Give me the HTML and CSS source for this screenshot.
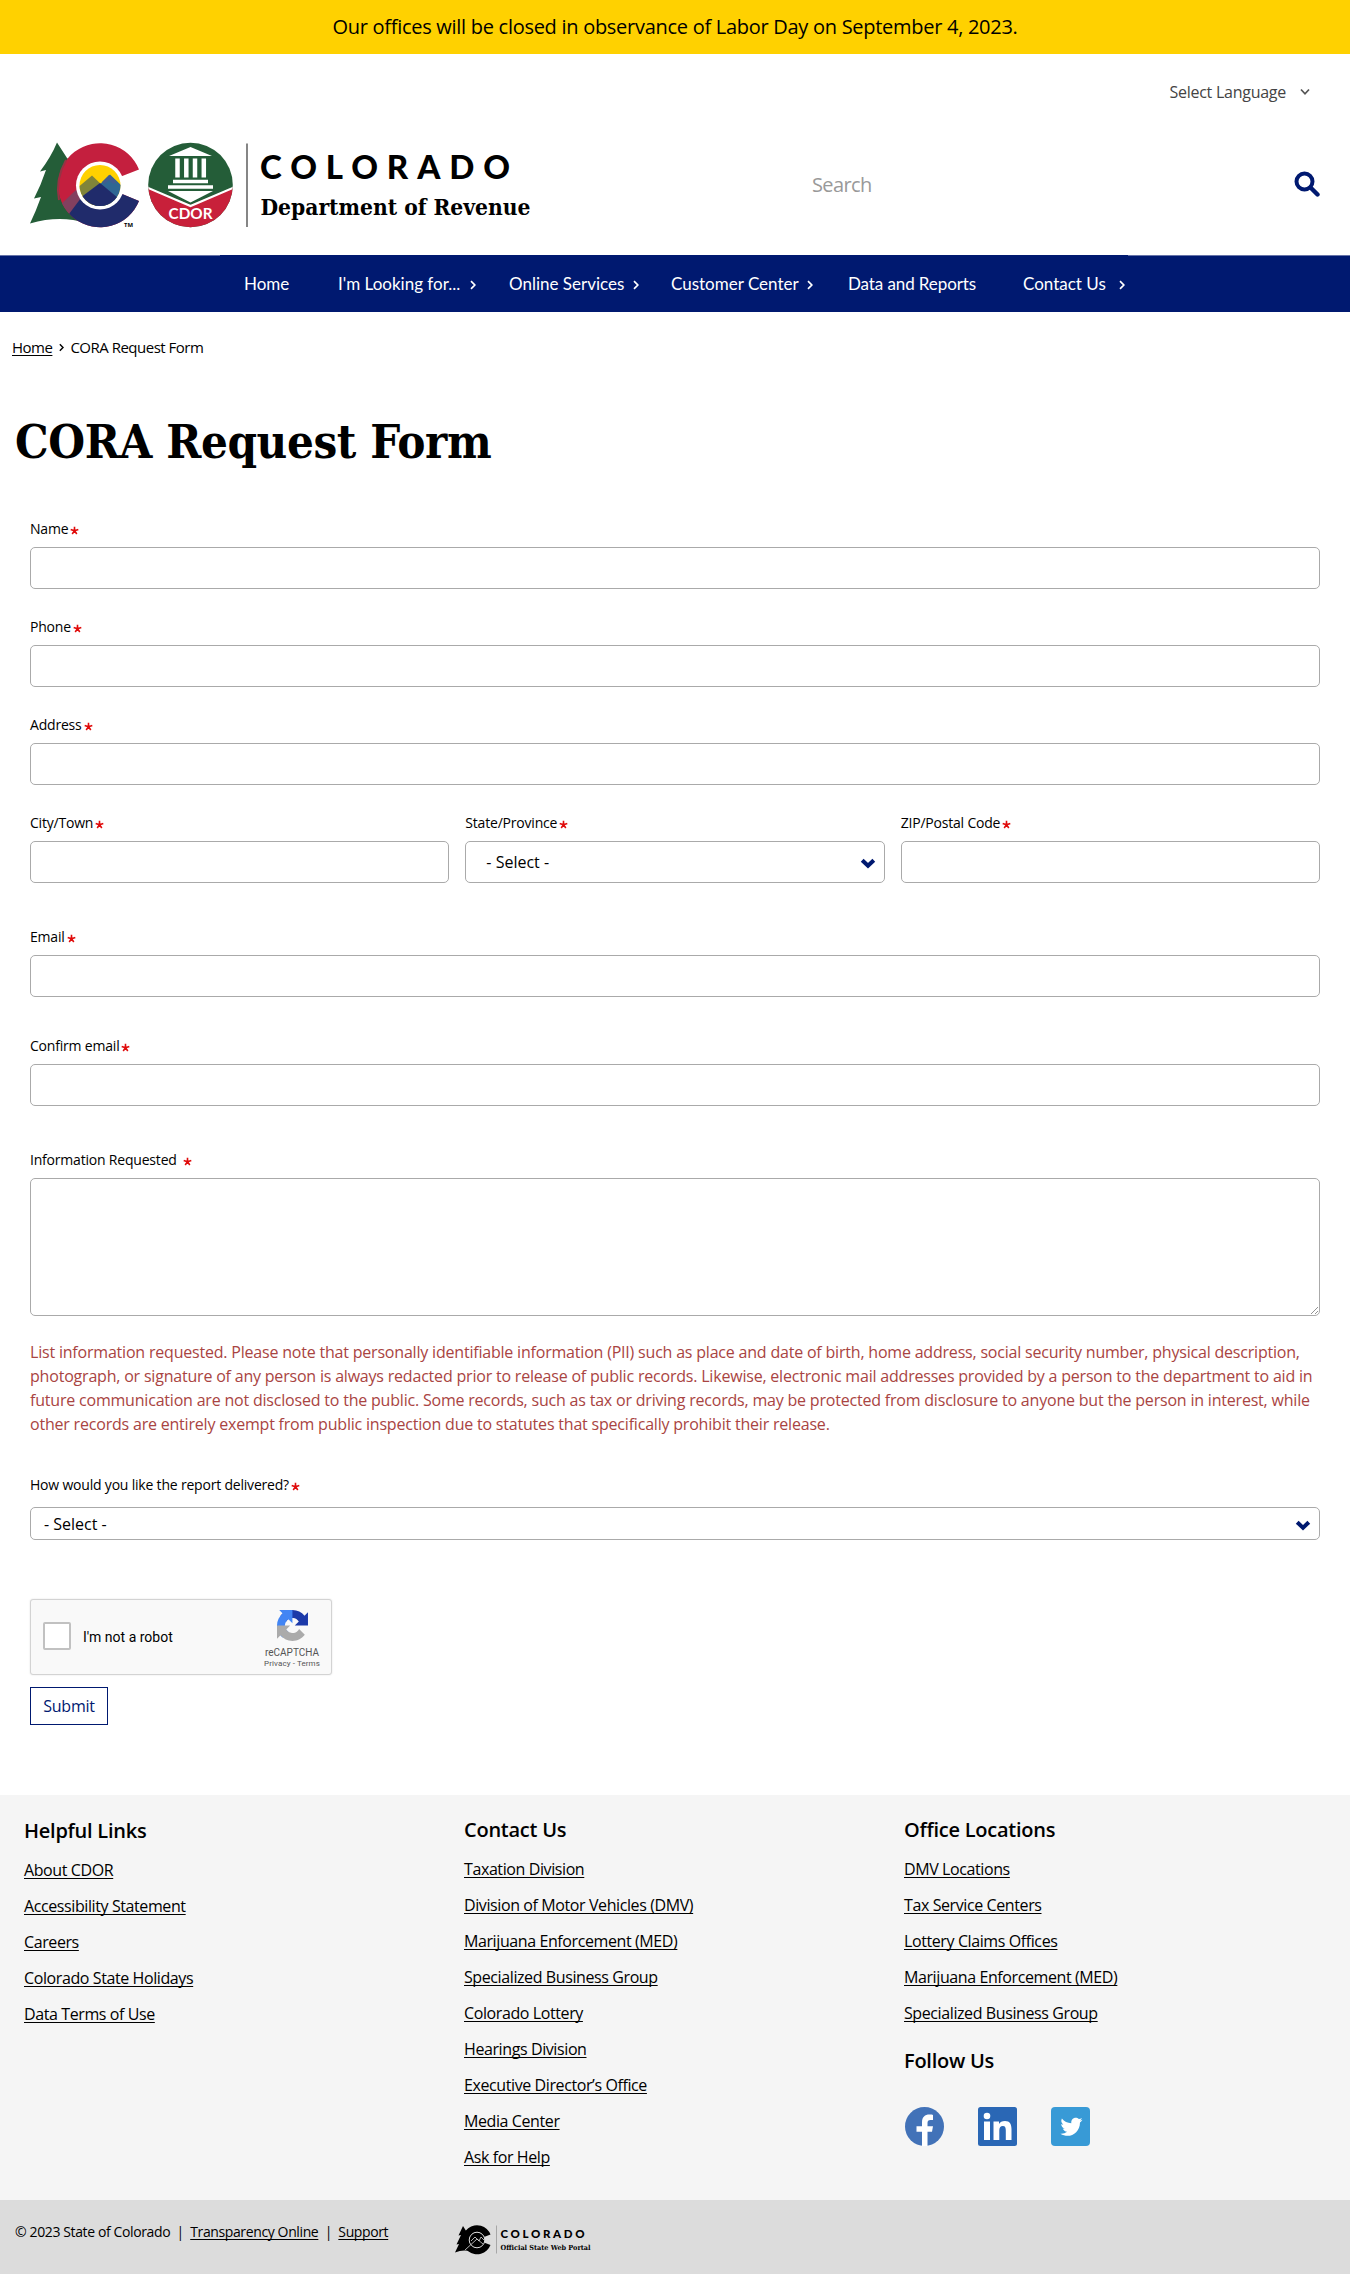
FILE: index.html
```html
<!DOCTYPE html>
<html lang="en">
<head>
<meta charset="utf-8">
<title>CORA Request Form | Department of Revenue</title>
<link rel="stylesheet" href="styles.css">
</head>
<body>
<svg class="defs" width="0" height="0" aria-hidden="true">
  <symbol id="star" viewBox="0 0 9 9"><path d="M4.5 4.8V.8M4.5 4.8L.7 3.5M4.5 4.8L8.3 3.5M4.5 4.8L2.2 8M4.5 4.8L6.8 8" fill="none" stroke="#e00b0b" stroke-width="1.6"/></symbol>
  <symbol id="caret" viewBox="0 0 16 12"><path d="M2.2 3.2L8 8.8L13.8 3.2" fill="none" stroke="#001970" stroke-width="4"/></symbol>
  <symbol id="angle" viewBox="0 0 6 10"><path d="M1 1.2L4.8 5L1 8.8" fill="none" stroke="currentColor" stroke-width="1.7"/></symbol>
</svg>

<div class="alert">Our offices will be closed in observance of Labor Day on September 4, 2023.</div>

<header class="header">
  <div class="language"><span>Select Language</span>
    <svg width="10" height="8" viewBox="0 0 10 8"><path d="M1 1.5L5 5.8L9 1.5" fill="none" stroke="#555" stroke-width="1.7"/></svg>
  </div>
  <div class="masthead">
    <svg class="logo" width="540" height="92" viewBox="30 140 540 92" role="img" aria-label="Colorado Department of Revenue">
      <clipPath id="disc"><circle cx="190.5" cy="185" r="42.3"/></clipPath>
      <clipPath id="sun"><circle cx="100" cy="185.5" r="20.5"/></clipPath>
      <clipPath id="cshape"><path d="M139 169.5A42 42 0 1 0 139 201L121 193.5A22 22 0 1 1 121 176.5Z"/></clipPath>
      <path d="M57 142.500L67 158L100 185L86 223Q60 215 30 223.500Q36 211 41 197L34 198.500Q41 185 46 170L40 171.500Q51 157 57 142.500Z" fill="#245d38"/>
      <g clip-path="url(#cshape)">
        <rect x="56" y="140" width="90" height="92" fill="#c41f3e"/>
        <path d="M57 208L76 190L84 198L69 216Z" fill="#83405f"/>
        <path d="M66 218L84 194L121 186L150 198V232H60Z" fill="#202b6b"/>
      </g>
      <path d="M59 200Q55 180 66 160" fill="none" stroke="#963344" stroke-width="2"/>
      <circle cx="100" cy="185.500" r="24" fill="#fff"/>
      <g clip-path="url(#sun)">
        <rect x="78" y="163" width="44" height="45" fill="#ffd100"/>
        <path d="M76 189L92 175.500L105 188L96 208H76Z" fill="#80843a"/>
        <path d="M95 189L110 174.500L124 188V208H95Z" fill="#2f6793"/>
        <path d="M102 182L109 175L117 182L113 184L109 180L105 184Z" fill="#405d91"/>
        <path d="M76 201L100 183L124 203V210H76Z" fill="#202b6b"/>
      </g>
      <text x="124" y="227" class="tm" textLength="9" lengthAdjust="spacingAndGlyphs">TM</text>
      <g clip-path="url(#disc)">
        <rect x="148" y="142" width="86" height="86" fill="#245d38"/>
        <path d="M147 187L190.500 205L234 187V230H147Z" fill="#c8203a"/>
        <path d="M147 187.500L190.500 206L234 187.500" fill="none" stroke="#fff" stroke-width="2.200"/>
        <path d="M190.500 147L212 156H169ZM168 191H213L190.500 202.500ZM173 179.800H208V183.200H173ZM168 185.300H213V188.800H168Z" fill="#fff"/>
        <path d="M177.500 158.500V177.500M186.300 158.500V177.500M195 158.500V177.500M203.800 158.500V177.500" stroke="#fff" stroke-width="4.500"/>
        <text x="168.500" y="218.800" class="cdor" textLength="44" lengthAdjust="spacingAndGlyphs">CDOR</text>
      </g>
      <path d="M247 143.500V227" stroke="#222" stroke-width="1.100"/>
      <text x="260" y="178.500" class="brand" textLength="250">COLORADO</text>
      <text x="260.500" y="214.500" class="dept" textLength="270" lengthAdjust="spacingAndGlyphs">Department of Revenue</text>
    </svg>
    <div class="search"><span>Search</span>
      <svg width="26" height="26" viewBox="0 0 26 26"><circle cx="10.500" cy="10.500" r="8" fill="none" stroke="#001970" stroke-width="4"/><path d="M16.500 16.500L23.500 23.500" stroke="#001970" stroke-width="4.400" stroke-linecap="round"/></svg>
    </div>
  </div>
</header>

<nav class="nav">
  <ul>
    <li class="n1">Home</li>
    <li class="n2"><span>I'm Looking for...</span><svg><use href="#angle"/></svg></li>
    <li class="n3"><span>Online Services</span><svg><use href="#angle"/></svg></li>
    <li class="n4"><span>Customer Center</span><svg><use href="#angle"/></svg></li>
    <li class="n5">Data and Reports</li>
    <li class="n6"><span>Contact Us</span><svg><use href="#angle"/></svg></li>
  </ul>
</nav>

<main>
  <div class="crumbs"><a>Home</a><svg><use href="#angle"/></svg><span>CORA Request Form</span></div>
  <h1>CORA Request Form</h1>
  <form class="form">
    <div class="field"><label>Name<svg class="star"><use href="#star"/></svg></label><div class="box"></div></div>
    <div class="field"><label>Phone<svg class="star"><use href="#star"/></svg></label><div class="box"></div></div>
    <div class="field"><label>Address<svg class="star"><use href="#star"/></svg></label><div class="box"></div></div>
    <div class="row">
      <div class="field"><label>City/Town<svg class="star"><use href="#star"/></svg></label><div class="box"></div></div>
      <div class="field"><label>State/Province<svg class="star"><use href="#star"/></svg></label><div class="box select"><span>- Select -</span><svg class="caret"><use href="#caret"/></svg></div></div>
      <div class="field"><label>ZIP/Postal Code<svg class="star"><use href="#star"/></svg></label><div class="box"></div></div>
    </div>
    <div class="field wide-gap"><label>Email<svg class="star"><use href="#star"/></svg></label><div class="box"></div></div>
    <div class="field confirm"><label>Confirm email<svg class="star"><use href="#star"/></svg></label><div class="box"></div></div>
    <div class="field wide-gap"><label class="info">Information Requested<svg class="star"><use href="#star"/></svg></label>
      <div class="box area"><svg width="9" height="9" viewBox="0 0 9 9"><path d="M1 8L8 1M5 8L8 5" stroke="#777" stroke-width=".8"/></svg></div></div>
    <p class="help">List information requested. Please note that personally identifiable information (PII) such as place and date of birth, home address, social security number, physical description,<br>photograph, or signature of any person is always redacted prior to release of public records. Likewise, electronic mail addresses provided by a person to the department to aid in<br>future communication are not disclosed to the public. Some records, such as tax or driving records, may be protected from disclosure to anyone but the person in interest, while<br>other records are entirely exempt from public inspection due to statutes that specifically prohibit their release.</p>
    <div class="field delivery"><label>How would you like the report delivered?<svg class="star"><use href="#star"/></svg></label><div class="box select slim"><span>- Select -</span><svg class="caret"><use href="#caret"/></svg></div></div>
    <div class="captcha">
      <div class="check"></div><span class="robot">I'm not a robot</span>
      <div class="rc">
        <svg width="31" height="31" viewBox="0 0 64 64">
          <path fill="#1c3aa9" d="M64 31.955l-.033-1.370V4.687l-7.160 7.160C50.948 4.674 42.033.093 32.050.093c-10.400 0-19.622 4.960-25.458 12.640l11.736 11.860a15.550 15.550 0 0 1 4.754-5.334c2.050-1.600 4.952-2.906 8.968-2.906.485 0 .86.057 1.135.163 4.976.393 9.288 3.140 11.828 7.124l-8.307 8.307L64 31.953"/>
          <path fill="#4285f4" d="M31.862.094l-1.370.033H4.594l7.160 7.160C4.580 13.147 0 22.060 0 32.046c0 10.400 4.960 19.622 12.640 25.458L24.500 45.768a15.550 15.550 0 0 1-5.334-4.754c-1.600-2.050-2.906-4.952-2.906-8.968 0-.485.057-.86.163-1.135.393-4.976 3.140-9.288 7.124-11.828l8.307 8.307L31.860.095"/>
          <path fill="#ababab" d="M.001 32.045l.033 1.370v25.898l7.160-7.160c5.860 7.173 14.774 11.754 24.760 11.754 10.400 0 19.622-4.960 25.458-12.640l-11.736-11.860a15.550 15.550 0 0 1-4.754 5.334c-2.050 1.600-4.952 2.906-8.968 2.906-.485 0-.86-.057-1.135-.163-4.976-.393-9.288-3.140-11.828-7.124l8.307-8.307c-10.522.04-22.400.066-27.295-.005"/>
        </svg>
        <b>reCAPTCHA</b><small>Privacy - Terms</small>
      </div>
    </div>
    <button type="button" class="submit">Submit</button>
  </form>
</main>

<footer>
  <div class="links">
    <section class="first"><h2>Helpful Links</h2><a>About CDOR</a><a>Accessibility Statement</a><a>Careers</a><a>Colorado State Holidays</a><a>Data Terms of Use</a></section>
    <section><h2>Contact Us</h2><a>Taxation Division</a><a>Division of Motor Vehicles (DMV)</a><a>Marijuana Enforcement (MED)</a><a>Specialized Business Group</a><a>Colorado Lottery</a><a>Hearings Division</a><a>Executive Director’s Office</a><a>Media Center</a><a>Ask for Help</a></section>
    <section><h2>Office Locations</h2><a>DMV Locations</a><a>Tax Service Centers</a><a>Lottery Claims Offices</a><a>Marijuana Enforcement (MED)</a><a>Specialized Business Group</a>
      <h2 class="follow">Follow Us</h2>
      <div class="social">
        <svg viewBox="0 0 39 39"><circle cx="19.500" cy="19.500" r="19.500" fill="#4272b8"/><path d="M17 39V24.800H11.500V19.300H17V15.500C17 10 20 7.600 24.300 7.600C26 7.600 27.500 7.800 28 7.900V13H25.500C23.300 13 22.500 14.200 22.500 16V19.300H28L27 24.800H22.500V39Z" fill="#fff"/></svg>
        <svg viewBox="0 0 39 39"><rect width="39" height="39" rx="2.500" fill="#2a67b5"/><path d="M6 14.500H12V33H6ZM15.500 14.500H21V17C22 15.300 24 14 27 14C32 14 33.500 17.300 33.500 22.300V33H27.800V23.500C27.800 21 27.300 19 24.900 19C22.200 19 21.300 20.800 21.300 23.500V33H15.500Z" fill="#fff"/><circle cx="9" cy="9" r="3.300" fill="#fff"/></svg>
        <svg viewBox="0 0 39 39"><rect width="39" height="39" rx="4" fill="#389ad6"/><path d="M31.500 12.800c-.9.400-1.700.6-2.600.7 1-.6 1.700-1.500 2-2.500-.9.500-1.900.9-3 1.100-3-3.100-8.300-.7-7.600 4.100-3.700-.2-7.200-2-9.400-4.800-1.200 2.200-.6 4.700 1.400 6.100-.8 0-1.500-.2-2.100-.6 0 2.200 1.500 4.200 3.700 4.600-.7.200-1.400.2-2.100.1.600 1.800 2.300 3.200 4.300 3.200-1.900 1.500-4.200 2.100-6.700 1.900 8.900 5.500 19.400-.3 19.600-11.300 1-.7 1.800-1.600 2.500-2.600Z" fill="#fff"/></svg>
      </div>
    </section>
  </div>
  <div class="bottom">
    <div class="legal"><span>© 2023 State of Colorado</span><i>|</i><a>Transparency Online</a><i>|</i><a>Support</a></div>
    <svg class="portal" width="150" height="32" viewBox="454 2223 150 32" role="img" aria-label="Colorado Official State Web Portal">
      <path d="M463 2226L468 2234L484 2240L472 2252Q464 2249 455 2252.500L459 2244L456.500 2244.500L461 2235L458.500 2235.500Z"/>
      <path d="M490.500 2234.500A14.500 14.500 0 1 0 490.500 2245L484 2242.500A7.500 7.500 0 1 1 484 2237Z"/>
      <circle cx="477" cy="2240" r="7.800" stroke="#dcdcdc"/>
      <path d="M465 2250L477 2239L483 2244M471 2241L475 2237L479 2241L481 2237L484 2240" fill="none" stroke="#dcdcdc" stroke-width=".8"/>
      <path d="M496.500 2225.500V2253.500" stroke="#999" stroke-width=".8"/>
      <text x="500.500" y="2237.500" class="pbrand" textLength="84">COLORADO</text>
      <text x="500.500" y="2249.800" class="pdept" textLength="90" lengthAdjust="spacingAndGlyphs">Official State Web Portal</text>
    </svg>
  </div>
</footer>
</body>
</html>
```

FILE: styles.css
```css
* { box-sizing: border-box; }
body { margin: 0; background: #fff; color: #000; font-family: "Open Sans", "Noto Sans", sans-serif; font-size: 16px; }
a { text-decoration: underline; text-decoration-skip-ink: none; text-underline-offset: 2px; text-decoration-thickness: 1px; }
svg { display: block; }
.defs { position: absolute; }

.alert { height: 54px; background: #ffd100; text-align: center; font-size: 20px; line-height: 54px; letter-spacing: -.28px; }

.header { height: 201px; padding: 26px 30px 0; }
.language { display: flex; justify-content: flex-end; align-items: center; gap: 14px; height: 24px; padding-right: 10px; color: #444; letter-spacing: -.26px; }
.masthead { display: flex; justify-content: space-between; margin-top: 36px; }
.search { display: flex; justify-content: space-between; width: 508px; height: 88px; align-items: center; color: #999; font-size: 20px; letter-spacing: -.6px; }
.tm { font: 700 6px "Open Sans", sans-serif; }
.cdor { font: 700 15px Lato, sans-serif; fill: #fff; }
.brand { font: 900 33px Lato, sans-serif; }
.dept { font: 700 22.5px "DejaVu Serif Condensed", "DejaVu Serif", serif; font-stretch: condensed; }

.nav { height: 57px; background: linear-gradient(#6673a8 1px, #001970 1px); color: #fff; font-family: Lato, sans-serif; font-size: 17px; }
.nav ul { display: flex; width: 908px; height: 57px; margin: 0 auto 0 220px; padding: 0 0 0 24px; list-style: none; background: #001970; align-items: center; }
.nav li { display: flex; align-items: center; flex: none; }
.nav svg { width: 6px; height: 10px; margin-top: 3px; }
.n1 { width: 94px; }
.n2 { width: 171px; gap: 10px; }
.n3 { width: 162px; gap: 9px; }
.n4 { width: 177px; gap: 8px; }
.n5 { width: 175px; letter-spacing: -.1px; }
.n6 { gap: 13px; }

.crumbs { display: flex; align-items: center; gap: 6.5px; height: 24px; margin: 23px 0 0 12px; font-size: 15px; letter-spacing: -.5px; }
.crumbs svg { width: 5px; height: 9px; }
h1 { height: 66px; margin: 50px 0 43px 15px; font: 700 47px/66px "DejaVu Serif Condensed", "DejaVu Serif", serif; font-stretch: condensed; letter-spacing: -.4px; white-space: nowrap; }

.form { width: 1290px; margin-left: 30px; }
.field { margin-bottom: 27px; }
label { display: flex; align-items: center; height: 20px; margin-bottom: 9px; font-size: 14px; letter-spacing: -.2px; white-space: nowrap; }
.star { width: 9px; height: 9px; margin: 4px 0 0 2px; }
.info .star { margin-left: 6px; }
.box { height: 42px; border: 1px solid #aaa; border-radius: 5px; }
.row { display: grid; grid-template-columns: repeat(3, 1fr); gap: 16px; }
.select { display: flex; align-items: center; justify-content: space-between; padding: 0 8px 0 20px; }
.caret { width: 16px; height: 12px; margin-top: 2px; }
.wide-gap { margin-top: 43px; }
.row .field { margin-bottom: 0; }
.confirm { margin-top: 38px; margin-bottom: 0; }
.wide-gap:has(.area) { margin-bottom: 0; }
.area { display: flex; height: 138px; align-items: flex-end; justify-content: flex-end; }
.help { margin: 24px 0 38px; color: #a94442; font-size: 16px; line-height: 24px; letter-spacing: -.2px; white-space: nowrap; }
.delivery { margin-bottom: 59px; }
.delivery label { margin-bottom: 13px; }
.slim { height: 33px; padding-left: 13px; }

.captcha { display: flex; align-items: center; width: 302px; height: 76px; margin-bottom: 12px; padding-left: 12px; background: #f9f9f9; border: 1px solid #d3d3d3; border-radius: 3px; box-shadow: 0 0 2px rgba(0,0,0,.12); font-family: Roboto, sans-serif; }
.check { width: 28px; height: 28px; margin-top: -2px; background: #fff; border: 2px solid #c1c1c1; border-radius: 2px; }
.robot { margin-left: 12px; font-size: 14px; }
.rc { display: flex; flex-direction: column; align-items: center; width: 70px; height: 76px; margin: 0 4px 0 auto; padding-top: 11px; color: #555; }
.rc b { margin-top: 5px; font-size: 10px; font-weight: 400; line-height: 13px; }
.rc small { font-size: 8px; line-height: 10px; letter-spacing: .1px; }
.submit { display: block; width: 78px; height: 38px; padding: 0; background: #fff; border: 1px solid #001970; color: #001970; font: 16px "Open Sans", sans-serif; letter-spacing: -.2px; }

footer { margin-top: 70px; }
.links { display: grid; grid-template-columns: 440px 440px 1fr; height: 405px; padding: 21px 0 0 24px; background: #f5f5f5; }
.first { padding-top: 1px; }
h2 { height: 28px; margin: 0 0 7px; font-size: 20px; font-weight: 600; line-height: 28px; letter-spacing: -.25px; }
.links a { display: table; height: 36px; font-size: 16px; line-height: 36px; letter-spacing: -.4px; white-space: nowrap; }
.follow { margin: 16px 0 0; }
.social { display: flex; gap: 34px; padding: 32px 0 0 1px; }
.social svg { width: 39px; height: 39px; }
.bottom { display: flex; height: 74px; padding: 23px 0 0 15px; background: #dcdcdc; }
.legal { display: flex; width: 439px; height: 18px; font-size: 14px; line-height: 18px; letter-spacing: -.38px; white-space: nowrap; }
.legal i { width: 20px; font-style: normal; text-align: center; }
.pbrand { font: 900 11.5px Lato, sans-serif; }
.pdept { font: 700 7px "DejaVu Serif Condensed", "DejaVu Serif", serif; font-stretch: condensed; }
```
